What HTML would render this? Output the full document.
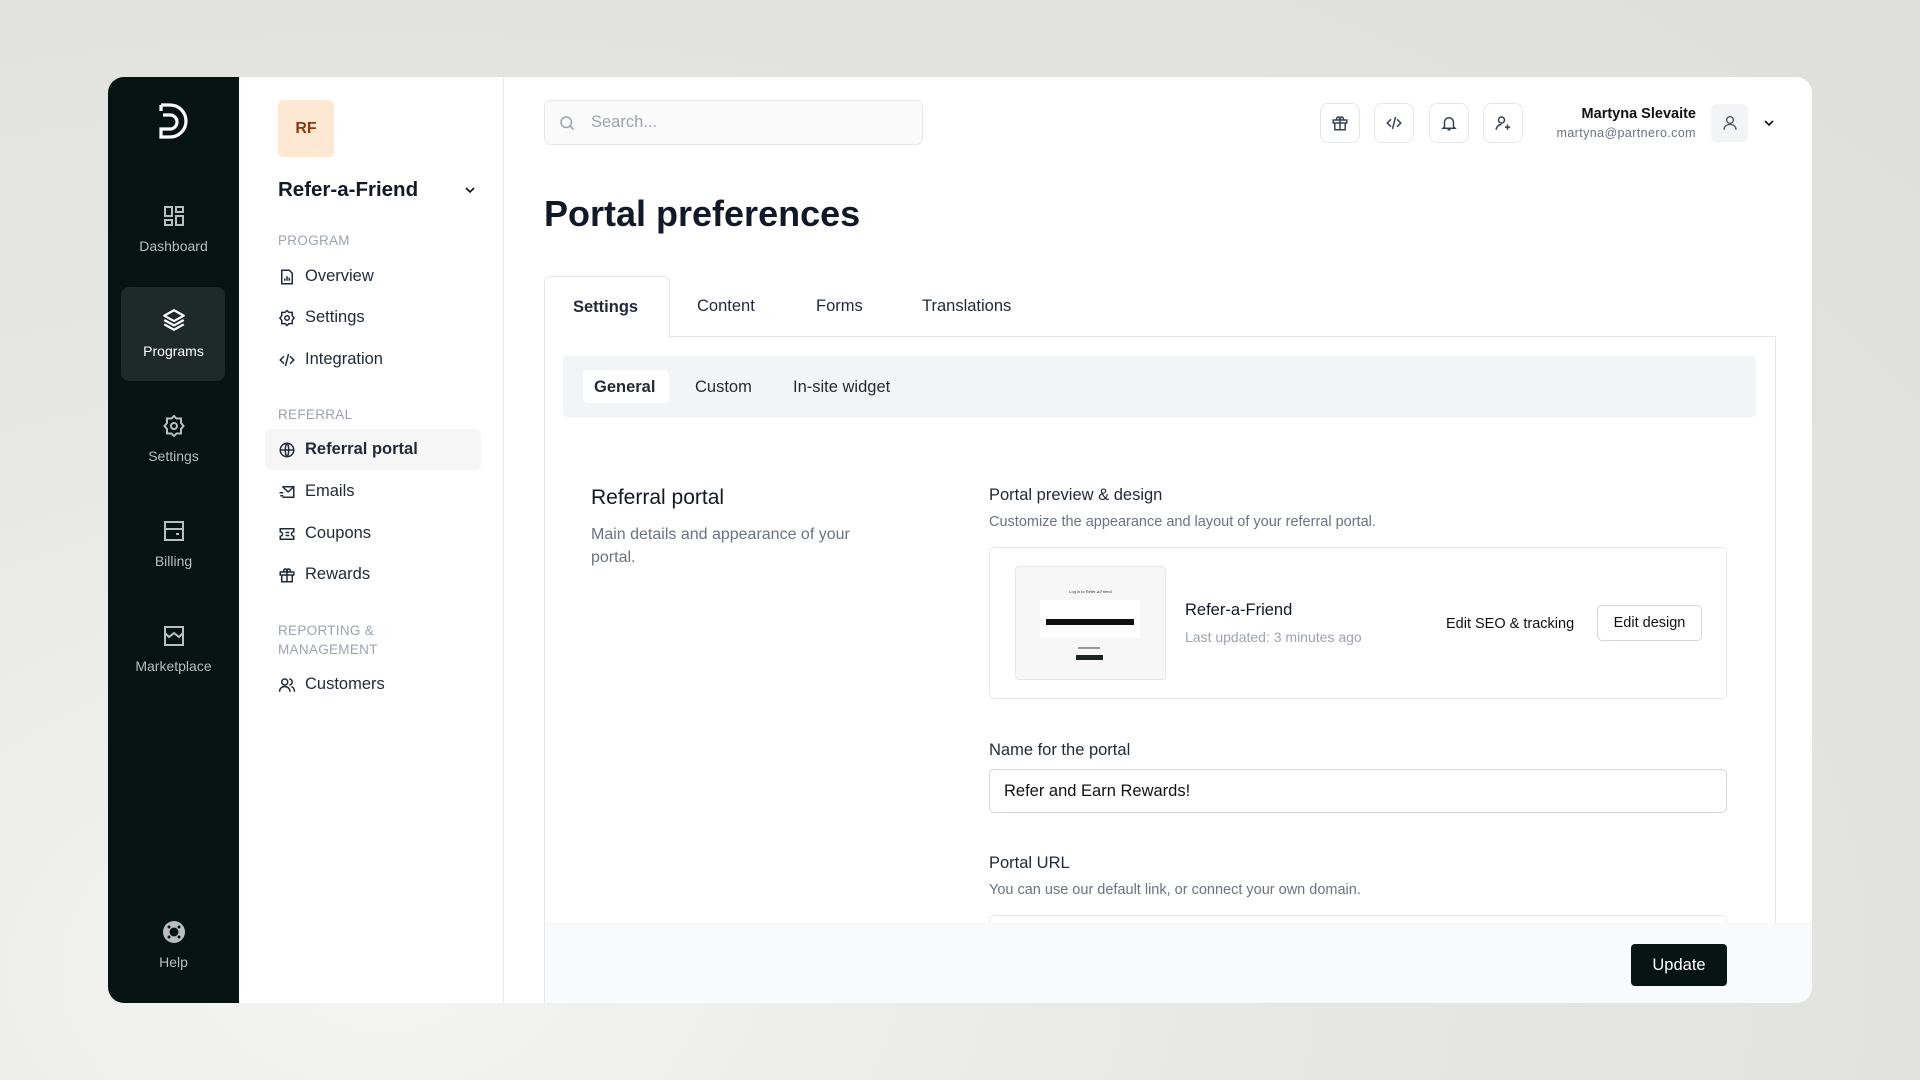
<!DOCTYPE html>
<html><head><meta charset="utf-8"><style>
*{box-sizing:border-box;margin:0;padding:0}
body{width:1920px;height:1080px;overflow:hidden;font-family:"Liberation Sans",sans-serif;background:radial-gradient(ellipse at 20% 90%,#f4f4f2 0%,#e6e6e4 45%,#dededc 100%);position:relative;color:#111827}
.a{position:absolute}
.win{left:108px;top:77px;width:1704px;height:926px;background:#fff;border-radius:16px;overflow:hidden}
.dark{left:0;top:0;width:131px;height:926px;background:#051312}
.nav{position:absolute;left:0;width:131px;text-align:center;color:#b8bfbe;font-size:14px}
.nav svg{display:block;margin:0 auto 10px}
.side{left:131px;top:0;width:265px;height:926px;border-right:1px solid #e7e8ea}
.sec{position:absolute;left:170px;font-size:13.5px;color:#9ca3af;letter-spacing:.3px}
.it{position:absolute;left:170px;font-size:16.5px;color:#1f2937;display:flex;align-items:center;gap:9px}
.it svg{width:18px;height:18px}
.ib{position:absolute;top:103px;width:40px;height:40px;border:1px solid #e5e7eb;border-radius:8px;display:flex;align-items:center;justify-content:center}
.t{position:absolute;font-size:16.5px;color:#1f2937}
</style></head><body>
<div class="a win">
 <div class="a dark">
  <svg class="a" style="left:49px;top:25px" width="34" height="40" viewBox="0 0 34 40" fill="none" stroke="#fff" stroke-width="3.2"><path d="M4 3h9a15 15 0 0 1 0 32H4v-8h9a7 7 0 0 0 0-14H6"/><path d="M4 3v6" /></svg>
  <div class="nav" style="top:127px"><svg width="24" height="24" viewBox="0 0 24 24" fill="none" stroke="#b8bfbe" stroke-width="2"><rect x="3" y="3" width="7" height="9"/><rect x="14" y="3" width="7" height="5"/><rect x="14" y="12" width="7" height="9"/><rect x="3" y="16" width="7" height="5"/></svg>Dashboard</div>
  <div class="a" style="left:13px;top:210px;width:104px;height:94px;background:#1e2a29;border-radius:8px"></div>
  <div class="nav" style="top:230px;color:#fff"><svg width="26" height="26" viewBox="0 0 24 24" fill="none" stroke="#fff" stroke-width="2" stroke-linejoin="round"><path d="M12 3l9 5-9 5-9-5z"/><path d="M3 12l9 5 9-5"/><path d="M3 16l9 5 9-5"/></svg>Programs</div>
  <div class="nav" style="top:337px"><svg width="24" height="24" viewBox="0 0 24 24" fill="none" stroke="#b8bfbe" stroke-width="2"><circle cx="12" cy="12" r="3"/><path d="M12 2l2.5 2.5H19v4.5L21.5 12 19 15v4.5h-4.5L12 22l-2.5-2.5H5V15l-2.5-3L5 9V4.5h4.5z"/></svg>Settings</div>
  <div class="nav" style="top:442px"><svg width="24" height="24" viewBox="0 0 24 24" fill="none" stroke="#b8bfbe" stroke-width="2"><rect x="3" y="3" width="18" height="18"/><path d="M3 10h18M14 15h3"/></svg>Billing</div>
  <div class="nav" style="top:547px"><svg width="24" height="24" viewBox="0 0 24 24" fill="none" stroke="#b8bfbe" stroke-width="2"><rect x="3" y="3" width="18" height="18"/><path d="M3 9l4 4 5-4 5 4 4-4"/></svg>Marketplace</div>
  <div class="nav" style="top:843px"><svg width="24" height="24" viewBox="0 0 24 24"><circle cx="12" cy="12" r="11" fill="#b8bfbe"/><circle cx="12" cy="12" r="4.5" fill="#051312"/><circle cx="7" cy="7" r="1.5" fill="#051312"/><circle cx="17" cy="7" r="1.5" fill="#051312"/><circle cx="7" cy="17" r="1.5" fill="#051312"/><circle cx="17" cy="17" r="1.5" fill="#051312"/></svg>Help</div>
 </div>
 <div class="a side"></div>
 <div class="a" style="left:170px;top:23px;width:56px;height:57px;background:#fde9d3;border-radius:5px;color:#8a3a12;font-weight:bold;font-size:16px;display:flex;align-items:center;justify-content:center">RF</div>
 <div class="a" style="left:170px;top:101px;font-size:20.5px;font-weight:bold;color:#111827">Refer-a-Friend</div>
 <svg class="a" style="left:356px;top:107px" width="12" height="12" viewBox="0 0 12 12" fill="none" stroke="#111" stroke-width="1.6"><path d="M2 4l4 4 4-4"/></svg>
 <div class="sec" style="top:156px">PROGRAM</div>
 <div class="it" style="top:190px"><svg viewBox="0 0 24 24" fill="none" stroke="#1f2937" stroke-width="2"><path d="M5 3h10l4 4v14H5z"/><path d="M9 17v-3M12 17v-6M15 17v-4"/></svg>Overview</div>
 <div class="it" style="top:231px"><svg viewBox="0 0 24 24" fill="none" stroke="#1f2937" stroke-width="2"><circle cx="12" cy="12" r="3"/><path d="M12 2l2.5 2.5H19v4.5L21.5 12 19 15v4.5h-4.5L12 22l-2.5-2.5H5V15l-2.5-3L5 9V4.5h4.5z"/></svg>Settings</div>
 <div class="it" style="top:273px"><svg viewBox="0 0 24 24" fill="none" stroke="#1f2937" stroke-width="2"><path d="M8 7l-5 5 5 5M16 7l5 5-5 5M14 4l-4 16"/></svg>Integration</div>
 <div class="sec" style="top:330px">REFERRAL</div>
 <div class="a" style="left:157px;top:352px;width:216px;height:41px;background:#f6f6f7;border-radius:6px"></div>
 <div class="it" style="top:363px;font-weight:bold"><svg viewBox="0 0 24 24" fill="none" stroke="#1f2937" stroke-width="2"><circle cx="12" cy="12" r="9"/><path d="M3 12h18M12 3c3 3 3 15 0 18M12 3c-3 3-3 15 0 18"/></svg>Referral portal</div>
 <div class="it" style="top:405px"><svg viewBox="0 0 24 24" fill="none" stroke="#1f2937" stroke-width="2"><path d="M6 5h15v14H6M6 5l7.5 7L21 5M2 13h5M3 17h4"/></svg>Emails</div>
 <div class="it" style="top:447px"><svg viewBox="0 0 24 24" fill="none" stroke="#1f2937" stroke-width="2"><path d="M3 5h18v4a3 3 0 0 0 0 6v4H3v-4a3 3 0 0 0 0-6z"/><path d="M10 10h5M10 14h5"/></svg>Coupons</div>
 <div class="it" style="top:488px"><svg viewBox="0 0 24 24" fill="none" stroke="#1f2937" stroke-width="2"><rect x="3" y="8" width="18" height="4"/><path d="M5 12v9h14v-9M12 8v13M8 8a2.5 2.5 0 1 1 4 0 2.5 2.5 0 1 1 4 0"/></svg>Rewards</div>
 <div class="sec" style="top:544px;line-height:19px">REPORTING &amp;<br>MANAGEMENT</div>
 <div class="it" style="top:598px"><svg viewBox="0 0 24 24" fill="none" stroke="#1f2937" stroke-width="2"><circle cx="9" cy="8" r="4"/><path d="M2 21c0-4 3-7 7-7s7 3 7 7M15 4a4 4 0 0 1 0 8M18 14c2 1 4 3 4 7"/></svg>Customers</div>

 <div class="a" style="left:436px;top:23px;width:379px;height:45px;border:1px solid #e5e7eb;border-radius:7px;background:#fafafa"></div>
 <svg class="a" style="left:450px;top:37px" width="18" height="18" viewBox="0 0 24 24" fill="none" stroke="#9ca3af" stroke-width="2"><circle cx="11" cy="11" r="7"/><path d="M16 16l5 5"/></svg>
 <div class="a" style="left:483px;top:36px;font-size:16.5px;color:#9ca3af">Search...</div>
 <div class="ib" style="left:1212px;top:26px"><svg width="18" height="18" viewBox="0 0 24 24" fill="none" stroke="#374151" stroke-width="2"><rect x="3" y="8" width="18" height="4"/><path d="M5 12v9h14v-9M12 8v13M8 8a2.5 2.5 0 1 1 4 0 2.5 2.5 0 1 1 4 0"/></svg></div>
 <div class="ib" style="left:1266px;top:26px"><svg width="18" height="18" viewBox="0 0 24 24" fill="none" stroke="#374151" stroke-width="2"><path d="M8 7l-5 5 5 5M16 7l5 5-5 5M14 4l-4 16"/></svg></div>
 <div class="ib" style="left:1321px;top:26px"><svg width="18" height="18" viewBox="0 0 24 24" fill="none" stroke="#374151" stroke-width="2"><path d="M6 17V11a6 6 0 0 1 12 0v6l2 2H4zM10 21h4"/></svg></div>
 <div class="ib" style="left:1375px;top:26px"><svg width="18" height="18" viewBox="0 0 24 24" fill="none" stroke="#374151" stroke-width="2"><circle cx="10" cy="8" r="4"/><path d="M3 21c0-4 3-7 7-7M18 14v7M14.5 17.5h7"/></svg></div>
 <div class="a" style="right:116px;top:29px;font-size:14.5px;font-weight:bold;color:#111;text-align:right">Martyna Slevaite</div>
 <div class="a" style="right:116px;top:49px;font-size:12.5px;color:#6b7280;letter-spacing:.4px">martyna@partnero.com</div>
 <div class="a" style="left:1603px;top:27px;width:37px;height:38px;background:#f3f4f6;border-radius:6px;display:flex;align-items:center;justify-content:center"><svg width="18" height="18" viewBox="0 0 24 24" fill="none" stroke="#4b5563" stroke-width="1.8"><circle cx="12" cy="8" r="4.5"/><path d="M4 21c0-4.5 3.5-7 8-7s8 2.5 8 7"/></svg></div>
 <svg class="a" style="left:1655px;top:40px" width="12" height="12" viewBox="0 0 12 12" fill="none" stroke="#111" stroke-width="1.6"><path d="M2 4l4 4 4-4"/></svg>

 <div class="a" style="left:436px;top:116px;font-size:36px;font-weight:bold;color:#111827">Portal preferences</div>
 <div class="a" style="left:436px;top:259px;width:1232px;height:700px;border:1px solid #e5e7eb"></div>
 <div class="a" style="left:436px;top:199px;width:126px;height:62px;border:1px solid #e5e7eb;border-bottom:none;border-radius:7px 7px 0 0;background:#fff"></div>
 <div class="t" style="left:465px;top:221px;font-weight:bold">Settings</div>
 <div class="t" style="left:589px;top:220px">Content</div>
 <div class="t" style="left:708px;top:220px">Forms</div>
 <div class="t" style="left:814px;top:220px">Translations</div>
 <div class="a" style="left:455px;top:279px;width:1193px;height:61px;background:#f3f4f6;border-radius:4px"></div>
 <div class="a" style="left:475px;top:293px;width:86px;height:33px;background:#fff;border-radius:5px"></div>
 <div class="t" style="left:486px;top:301px;font-weight:bold">General</div>
 <div class="t" style="left:587px;top:301px">Custom</div>
 <div class="t" style="left:685px;top:301px">In-site widget</div>

 <div class="a" style="left:483px;top:409px;font-size:21px;color:#111827">Referral portal</div>
 <div class="a" style="left:483px;top:446px;font-size:16px;color:#6b7280;line-height:23px;width:300px">Main details and appearance of your portal.</div>
 <div class="a" style="left:881px;top:409px;font-size:16.5px;color:#1f2937">Portal preview &amp; design</div>
 <div class="a" style="left:881px;top:437px;font-size:14.5px;color:#6b7280">Customize the appearance and layout of your referral portal.</div>
 <div class="a" style="left:881px;top:470px;width:738px;height:152px;border:1px solid #e5e7eb;border-radius:5px"></div>
 <div class="a" style="left:907px;top:489px;width:151px;height:114px;background:#f7f7f8;border:1px solid #e5e7eb;border-radius:4px">
  <div class="a" style="left:0;right:0;top:22px;text-align:center;font-size:4px;color:#333">Log in to Refer-a-Friend</div>
  <div class="a" style="left:24px;top:33px;width:100px;height:38px;background:#fff"></div>
  <div class="a" style="left:30px;top:52px;width:88px;height:6px;background:#111"></div>
  <div class="a" style="left:62px;top:80px;width:22px;height:2px;background:#999"></div>
  <div class="a" style="left:60px;top:88px;width:27px;height:5px;background:#1b2624"></div>
 </div>
 <div class="a" style="left:1077px;top:524px;font-size:16.5px;color:#111827">Refer-a-Friend</div>
 <div class="a" style="left:1077px;top:552px;font-size:14px;color:#9ca3af">Last updated: 3 minutes ago</div>
 <div class="a" style="left:1338px;top:539px;font-size:14.5px;color:#111">Edit SEO &amp; tracking</div>
 <div class="a" style="left:1489px;top:528px;width:105px;height:36px;border:1px solid #d1d5db;border-radius:5px;font-size:14.5px;color:#111;display:flex;align-items:center;justify-content:center">Edit design</div>
 <div class="a" style="left:881px;top:664px;font-size:16.5px;color:#1f2937">Name for the portal</div>
 <div class="a" style="left:881px;top:692px;width:738px;height:44px;border:1px solid #d1d5db;border-radius:5px;font-size:16.5px;color:#111;padding:12px 14px">Refer and Earn Rewards!</div>
 <div class="a" style="left:881px;top:777px;font-size:16.5px;color:#1f2937">Portal URL</div>
 <div class="a" style="left:881px;top:805px;font-size:14.5px;color:#6b7280">You can use our default link, or connect your own domain.</div>
 <div class="a" style="left:881px;top:838px;width:738px;height:44px;border:1px solid #e5e7eb;border-radius:5px"></div>
 <div class="a" style="left:437px;top:846px;width:1267px;height:80px;background:#f9fafb"></div>
 <div class="a" style="left:1523px;top:867px;width:96px;height:42px;background:#061412;border-radius:4px;color:#fff;font-size:16.5px;display:flex;align-items:center;justify-content:center">Update</div>
</div>
</body></html>
